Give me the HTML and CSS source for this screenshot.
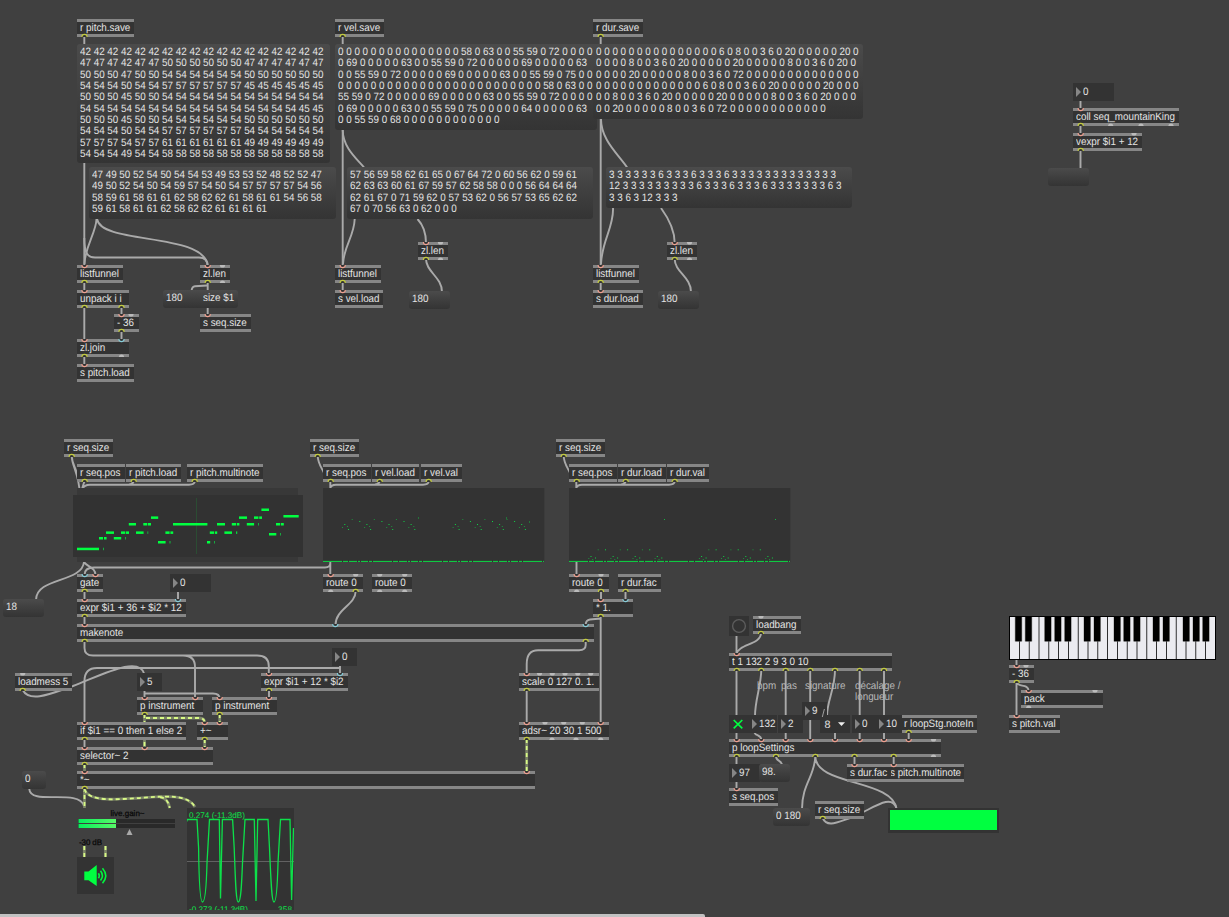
FILE: index.html
```html
<!DOCTYPE html>
<html lang="fr">
<head>
<meta charset="utf-8">
<title>Sequencer patch</title>
<link rel="stylesheet" href="styles.css">
</head>
<body>
<main class="patcher" id="patcher">
  <svg class="layer" id="cords" width="1229" height="917"></svg>

  <div class="message" style="left:77px;top:44px;width:253px;height:119px"><span class="txt">42 42 42 42 42 42 42 42 42 42 42 42 42 42 42 42 42 42
47 47 47 42 47 47 50 50 50 50 50 50 47 47 47 47 47 47
50 50 50 47 50 50 54 54 54 54 54 54 50 50 50 50 50 50
54 54 54 50 54 54 57 57 57 57 57 57 45 45 45 45 45 45
50 50 50 45 50 50 54 54 54 54 54 54 54 54 54 54 54 54
54 54 54 54 54 54 54 54 54 54 54 54 54 54 54 54 45 45
50 50 50 45 50 50 54 54 54 54 54 54 50 50 50 50 50 50
54 54 54 50 54 54 57 57 57 57 57 57 54 54 54 54 54 54
57 57 57 54 57 57 61 61 61 61 61 61 49 49 49 49 49 49
54 54 54 49 54 54 58 58 58 58 58 58 58 58 58 58 58 58</span></div>
  <div class="message" style="left:89px;top:167px;width:247px;height:52px"><span class="txt">47 49 50 52 54 50 54 54 53 49 53 53 52 48 52 52 47
49 50 52 54 50 54 59 57 54 50 54 57 57 57 57 54 56
58 59 61 58 61 61 62 58 62 62 61 58 61 61 54 56 58
59 61 58 61 61 62 58 62 62 61 61 61 61</span></div>
  <div class="message" style="left:335px;top:44px;width:262px;height:86px"><span class="txt">0 0 0 0 0 0 0 0 0 0 0 0 0 0 0 58 0 63 0 0 55 59 0 72 0 0 0 0
0 69 0 0 0 0 0 63 0 0 55 59 0 72 0 0 0 0 0 69 0 0 0 0 0 63
0 0 55 59 0 72 0 0 0 0 0 69 0 0 0 0 0 63 0 0 55 59 0 75 0 0 0
0 0 0 0 0 0 0 0 0 0 0 0 0 0 0 0 0 0 0 0 0 0 0 0 0 58 0 63 0 0 0
55 59 0 72 0 0 0 0 0 69 0 0 0 0 0 63 0 0 55 59 0 72 0 0 0 0
0 69 0 0 0 0 0 63 0 0 55 59 0 75 0 0 0 0 0 64 0 0 0 0 0 63
0 0 55 59 0 68 0 0 0 0 0 0 0 0 0 0 0 0</span></div>
  <div class="message" style="left:347px;top:167px;width:246px;height:52px"><span class="txt">57 56 59 58 62 61 65 0 67 64 72 0 60 56 62 0 59 61
62 63 63 60 61 67 59 57 62 58 58 0 0 0 56 64 64 64
62 61 67 0 71 59 62 0 57 53 62 0 56 57 53 65 62 62
67 0 70 56 63 0 62 0 0 0</span></div>
  <div class="message" style="left:593px;top:44px;width:270px;height:75px"><span class="txt">0 0 0 0 0 0 0 0 0 0 0 0 0 0 0 6 0 8 0 0 3 6 0 20 0 0 0 0 0 20 0
0 0 0 0 8 0 0 3 6 0 20 0 0 0 0 0 20 0 0 0 0 0 8 0 0 3 6 0 20 0
0 0 0 0 20 0 0 0 0 0 8 0 0 3 6 0 72 0 0 0 0 0 0 0 0 0 0 0 0 0 0
0 0 0 0 0 0 0 0 0 0 0 0 0 6 0 8 0 0 3 6 0 20 0 0 0 0 0 20 0 0 0
0 0 8 0 0 3 6 0 20 0 0 0 0 0 20 0 0 0 0 0 8 0 0 3 6 0 20 0 0 0
0 0 20 0 0 0 0 0 8 0 0 3 6 0 72 0 0 0 0 0 0 0 0 0 0 0 0</span></div>
  <div class="message" style="left:606px;top:167px;width:246px;height:41px"><span class="txt">3 3 3 3 3 3 6 3 3 3 6 3 3 3 6 3 3 3 3 3 3 3 3 3 3 3 3 3
12 3 3 3 3 3 3 3 3 3 6 3 3 3 6 3 3 3 6 3 3 3 3 3 3 3 6 3
3 3 6 3 12 3 3 3</span></div>

  <div class="comment" style="left:757px;top:681px"><span class="txt">bpm</span></div>
  <div class="comment" style="left:781px;top:681px"><span class="txt">pas</span></div>
  <div class="comment" style="left:805px;top:681px"><span class="txt">signature</span></div>
  <div class="comment" style="left:855px;top:681px"><span class="txt">décalage /
longueur</span></div>
</main>
<script src="patch.js"></script>
</body>
</html>
```
FILE: styles.css
```css
body {
  margin: 0;
  background: #404040;
  overflow: hidden;
}

.patcher {
  position: relative;
  width: 1229px;
  height: 917px;
  overflow: hidden;
  background: #404040;
  color: #e4e4e4;
  font-family: "Liberation Sans", Arial, sans-serif;
  font-size: 10.7px;
  text-rendering: geometricPrecision;
}

/* Slightly condensed lettering */
.txt {
  display: block;
  width: max-content;
  transform: scaleX(.9206);
  transform-origin: 0 0;
}

.layer {
  position: absolute;
  left: 0;
  top: 0;
  pointer-events: none;
}

.object,
.number,
.message,
.comment {
  position: absolute;
  box-sizing: border-box;
  white-space: pre;
}

.object {
  height: 18px;
  padding-left: 3px;
  border-top: 3px solid #868686;
  border-bottom: 3px solid #868686;
  background: #333;
  line-height: 12px;
}

.number {
  height: 18px;
  padding-left: 10px;
  background: #333;
  line-height: 18px;
}

.number::before {
  content: "";
  position: absolute;
  left: 3px;
  top: 4px;
  border-left: 5px solid #868686;
  border-top: 5px solid transparent;
  border-bottom: 5px solid transparent;
}

.message {
  padding: 3px 0 0 3px;
  border-radius: 3px;
  background: linear-gradient(#4b4b4b, #404040 45%, #343434);
  line-height: 11.33px;
}

.comment {
  color: #b8b8b8;
  line-height: 11.33px;
}

.cord {
  fill: none;
  stroke: #aaa;
  stroke-width: 1.9;
}

.signal-base {
  fill: none;
  stroke: #7c8468;
  stroke-width: 2.8;
}

.signal {
  fill: none;
  stroke: #d8fa86;
  stroke-width: 1.8;
  stroke-dasharray: 4 3;
}

.port { fill: #333; stroke-width: 1.1; }
.port-r { stroke: #f0a090; }
.port-b { stroke: #86ccd8; }
.port-y { stroke: #c3cc3e; }
.port-g { fill: #bbb; stroke: none; }

.display-text {
  fill: #0de04a;
  font-size: 8.2px;
}

.label-text {
  fill: #080808;
  stroke: #080808;
  stroke-width: .25;
  font-size: 8px;
}
```
FILE: patch.js
```js
const patcher = document.getElementById("patcher");
const NS = "http://www.w3.org/2000/svg";

// Ports are written as "<x><kind>": r = hot inlet, b = cold inlet, y = outlet, g = unconnected.
// [text, x, y, width, inlets, outlets]
const objects = [
  ["r pitch.save", 77, 19, 57, "", "84.5y"],
  ["listfunnel", 77, 265, 46, "84.5r", "84.5y"],
  ["zl.len", 200, 265, 30, "207.7r 222.5g", "207.7y 222.5g"],
  ["unpack i i", 77, 290, 52, "84.5r", "84.5y 121.5y"],
  ["- 36", 114, 314, 25, "121.5r 131g", "121.5y"],
  ["s seq.size", 200, 314, 51, "207.7r", ""],
  ["zl.join", 77, 339, 52, "84.5r 121.5b", "84.5y 121.5g"],
  ["s pitch.load", 77, 364, 57, "84.5r", ""],
  ["r vel.save", 335, 19, 49, "", "342.7y"],
  ["listfunnel", 335, 265, 46, "342.7r", "342.7y"],
  ["s vel.load", 335, 290, 48, "342.7r", ""],
  ["zl.len", 418, 242, 30, "426r 440.5g", "426y 440.5g"],
  ["r dur.save", 593, 19, 50, "", "600.7y"],
  ["listfunnel", 593, 265, 46, "600.7r", "600.7y"],
  ["s dur.load", 593, 290, 50, "600.7r", ""],
  ["zl.len", 667, 242, 30, "674.7r 689.5g", "674.7y 689.5g"],
  ["coll seq_mountainKing", 1073, 108, 106, "1080.7r", "1080.7y 1110.7g 1141g 1171g"],
  ["vexpr $i1 + 12", 1073, 133, 69, "1080.7r 1134g", "1080.7y"],
  ["r seq.size", 64, 439, 49, "", "71.7y"],
  ["r seq.pos", 77, 464, 48, "", "84.7y"],
  ["r pitch.load", 126, 464, 55, "", "133.7y"],
  ["r pitch.multinote", 187, 464, 76, "", "194.7y"],
  ["gate", 77, 574, 26, "84.7b 95.5r", "84.7y"],
  ["expr $i1 + 36 + $i2 * 12", 77, 599, 109, "84.7r 178b", "84.7y"],
  ["makenote", 77, 624, 517, "84.7r 335.3b 585.7b", "84.7y 585.7y"],
  ["r seq.size", 310, 439, 49, "", "317.7y"],
  ["r seq.pos", 323, 464, 48, "", "330.7y"],
  ["r vel.load", 372, 464, 47, "", "379.7y"],
  ["r vel.val", 421, 464, 41, "", "428.7y"],
  ["route 0", 323, 574, 40, "330.7r 355.7g", "330.7g 355.7y"],
  ["route 0", 372, 574, 40, "379.7g 404.7g", "379.7g 404.7g"],
  ["r seq.size", 556, 439, 49, "", "563.7y"],
  ["r seq.pos", 569, 464, 48, "", "576.7y"],
  ["r dur.load", 618, 464, 48, "", "625.7y"],
  ["r dur.val", 667, 464, 42, "", "674.7y"],
  ["route 0", 569, 574, 40, "576.7r 601g", "576.7g 601y"],
  ["r dur.fac", 618, 574, 43, "", "625.5y"],
  ["* 1.", 593, 599, 40, "600.7r 625.5b", "600.7y"],
  ["scale 0 127 0. 1.", 519, 673, 80, "526.7r 539.5g 552.3g 565g 577.8g 590.7g", "526.7y"],
  ["adsr~ 20 30 1 500", 519, 722, 90, "526.7r 545g 563.7g 582.3g 600.7r", "526.7y 552g 576g 600.7g"],
  ["loadmess 5", 15, 673, 57, "22.7g", "22.7y"],
  ["expr $i1 + 12 * $i2", 261, 673, 87, "269r 340b", "269y"],
  ["p instrument", 137, 697, 66, "144.7r 195.3r", "144.7y"],
  ["p instrument", 212, 697, 65, "219.7r 269r", "219.7y"],
  ["if $i1 == 0 then 1 else 2", 77, 722, 109, "84.7r", "84.7y"],
  ["+~", 197, 722, 31, "204.7r 219.7r", "204.7y"],
  ["selector~ 2", 77, 747, 136, "84.7r 144.7r 204.7r", "84.7y"],
  ["*~", 77, 771, 458, "84.7r 526.7r", "84.7y"],
  ["loadbang", 753, 616, 48, "761g", "761y"],
  ["t 1 132 2 9 3 0 10", 729, 653, 163, "736.7r", "736.7y 761.3y 785.7y 810.3y 835y 859.7y 884y"],
  ["r loopStg.noteIn", 901, 715, 76, "", "908.7y"],
  ["p loopSettings", 729, 739, 212, "736.7r 761.3r 785.7r 810.3r 835r 859.7r 884r 908.7r 933.5g", "736.7y 776y 815.3y 854.5y 893.7y 933.5g"],
  ["s pitch.multinote", 887, 764, 77, "893.7r", ""],
  ["s dur.fac", 847, 764, 44, "854.5r", ""],
  ["s seq.pos", 729, 788, 49, "736.7r", ""],
  ["r seq.size", 815, 801, 49, "", "822.7y"],
  ["- 36", 1009, 665, 25, "1016.7r 1026g", "1016.7y"],
  ["pack", 1021, 690, 82, "1028.7r 1095g", "1028.7g"],
  ["s pitch.val", 1009, 715, 51, "1016.7r", ""]
];

// [text, x, y, width]
const messages = [
  ["180", 163, 290, 41], ["size $1", 200, 290, 38], ["180", 409, 291, 41], ["180", 658, 291, 41],
  ["", 1048, 168, 41], ["18", 3, 599, 41], ["0", 22, 771, 24], ["0 180", 773, 808, 37]
];
const numbers = [
  ["0", 1073, 83, 41], ["0", 170, 574, 41], ["0", 332, 648, 25], ["5", 137, 673, 25],
  ["132", 749, 715, 28], ["2", 778, 715, 25], ["9", 802, 702, 25],
  ["0", 852, 715, 26], ["10", 876, 715, 26], ["97", 729, 764, 31]
];

const cords = [
  "M84.3 36V266M342.7 36V266M600.7 36V266",
  "M96.5 219C96 233 85 246 84.5 264M97 219C101 245 205 232 207.7 266",
  "M84.3 238C84.3 254 88 257.5 95 257.5H199Q207.7 257.5 207.7 266",
  "M84.3 283V291M84.3 307V340M121.5 307V315M121.5 331V340M84.3 356V365M207.7 282V315",
  "M207 285.5L195 286.2Q192 286.5 191.5 291",
  "M342.7 130C343 148 357 159 364.5 168M354.7 219C354 237 344 245 343 264M417.5 219C424 226 426 233 426 243",
  "M342.7 282V291M426 259C426 272 442 277 442 292",
  "M601 119C601 140 618 154 627.5 168M613 208C614 227 602 240 601 264M661 208C669 219 674.7 230 674.7 243",
  "M600.7 282V291M674.7 259C674.7 272 691 277 691 292",
  "M1080.5 101V109M1080.5 125V134M1080.5 150V169",
  "M71.7 456C72 467 79 473 80 495M71.7 456C72 464 76 468 77 474",
  "M84.5 481L82 489M194.7 481Q195 484.7 189 484.7H90Q84 484.7 82.5 489M133.7 481Q133 484 129 484.5",
  "M84 562C82 583 36 577 36 600M84 562C87 567 95.5 567 95.5 575",
  "M330.3 561V575M330.3 563Q330.3 567.5 325 567.5H94Q84.5 567.5 84.5 575",
  "M84.5 591V600M178 591V600M84.5 616V625",
  "M317.7 456C318 464 322 468 324 473M330.3 481V489M428.7 481Q428.7 484.7 423 484.7H336Q331 484.7 330.3 488M379.7 481Q379 484 375 484.5",
  "M355.7 591C355.7 605 335.5 609 335.5 625",
  "M563.7 456C564 464 568 468 570 473M576.3 481V489M674.7 481Q674.7 484.7 669 484.7H582Q577 484.7 576.3 488M625.7 481Q625 484 621 484.5",
  "M576.5 561V575M601 591V600M625.5 591V600M600.7 616V723M600.7 618.5L590 619.5Q585.7 620 585.7 625",
  "M585.7 641V645Q585.7 650 579 650.3H538C530 650.3 526.7 656 526.7 664V674M526.7 690V723",
  "M84.5 641V648Q84.5 655.5 93 655.5H257Q268.8 655.5 268.8 666V674M183 655.5Q195 655.5 195 667V698",
  "M340 665V674M340 668H97Q84.5 668 84.5 681V723",
  "M22.7 690C30 704 55 692 73 686C102 675 139 655 144.3 674",
  "M144.5 690V698M144.5 693.5H213Q219.7 693.5 219.7 699M269 690V698M84.5 739V748",
  "M29.3 789C30 806 79 788 84 806",
  "M736.5 635V654M761 633C761 645 738 644 736.7 654",
  "M736.5 670V740M785.7 670V740M810.2 670V740M859.7 670V740M884 670V740",
  "M761.3 670C761 686 755 700 755 716M754 732C756 737 761 734 761.3 740",
  "M835 670C835 689 827 701 827 716M835 732V740M908.7 732V740",
  "M736.5 756V765M736.5 781V789M776 756C776 762 781 759 782 765M854.5 756V765M893.7 756V765",
  "M815.3 756C815 776 802 784 802 809M815.3 756C815 786 893 779 896.5 809",
  "M822.7 818C827 828 838 822 850 818C870 811 891 792 896.5 808",
  "M1016.5 660V666M1016.5 682V716M1016.5 682C1018 688 1028 683 1028.7 691"
];

const signals = [
  "M144.5 714V748M146 718H199Q204.7 718 204.7 723", "M219.7 714V723", "M204.7 739V748",
  "M84.5 764V772", "M84.5 788V808",
  "M84.5 789C88 803 120 799 140 798C165 796 188 794 195 807",
  "M160 797Q168 798 169.7 808", "M84.3 846V857", "M105.5 846V857", "M526.7 739V772"
];

function box(kind, [text, x, y, w]) {
  const el = document.createElement("div");
  const label = document.createElement("span");
  el.className = kind;
  label.className = "txt";
  label.textContent = text;
  el.appendChild(label);
  el.style.cssText = `left:${x}px;top:${y}px;width:${w}px;height:18px`;
  patcher.appendChild(el);
}

function layer(markup) {
  const svg = document.createElementNS(NS, "svg");
  svg.setAttribute("class", "layer");
  svg.setAttribute("width", 1229);
  svg.setAttribute("height", 917);
  svg.innerHTML = markup;
  patcher.appendChild(svg);
}

const rect = (x, y, w, h, fill, extra = "") =>
  `<rect x="${x}" y="${y}" width="${w}" height="${h}" fill="${fill}" ${extra}/>`;

document.getElementById("cords").innerHTML =
  cords.map(d => `<path class="cord" d="${d}"/>`).join("") +
  signals.map(d => `<path class="signal-base" d="${d}"/><path class="signal" d="${d}"/>`).join("");

numbers.slice(0, 4).forEach(n => box("number", n));
messages.forEach(m => box("message", m));
objects.forEach(o => box("object", o));
numbers.slice(4).forEach(n => box("number", n));
box("message", ["98.", 759, 764, 31]);

// Inlets and outlets
let ports = "";
const eachPort = (list, draw) => list.split(" ").filter(Boolean).forEach(p => draw(parseFloat(p), p.slice(-1)));
objects.forEach(([, , y, , ins, outs]) => {
  eachPort(ins, (x, k) => { ports += `<path class="port port-${k}" d="M${x - 2.6} ${y}a2.6 2.6 0 0 0 5.2 0"/>`; });
  eachPort(outs, (x, k) => { ports += `<path class="port port-${k}" d="M${x - 2.6} ${y + 18}a2.6 2.6 0 0 1 5.2 0"/>`; });
});

// Pitch table: [x, y, width, dim]
const notes = [
  [77, 549, 22], [103, 549, 1, 1], [99, 538.3, 4], [104, 538.3, 2.6], [106, 532.7, 8], [113.8, 538.3, 7.4],
  [121, 532.7, 4.3], [126, 532.7, 3], [125, 538.3, 1, 1], [128.8, 524.3, 7.2], [136, 532.7, 7.6],
  [143.3, 524.3, 4], [148, 524.3, 3], [147.3, 532.7, 1, 1], [151, 517.7, 7.2], [158, 542.3, 7.6],
  [169.4, 542.3, 1.2, 1], [165.4, 532.7, 4.2], [170.4, 532.7, 2.8], [173, 524.3, 34.4], [207, 542.3, 3.2],
  [214, 542.3, 1, 1], [209.8, 532.7, 4.4], [215, 532.7, 2.2], [217, 524.3, 8], [224.4, 532.7, 7.6],
  [231.8, 524.3, 4.2], [236.8, 524.3, 2.6], [236.2, 532.7, 1], [239, 517.7, 8], [246.8, 524.3, 7.3],
  [258, 524.3, 1, 1], [254, 517.7, 4.4], [259.2, 517.7, 2.8], [261.4, 509.8, 7.6], [269, 534.3, 7.3],
  [280, 534.3, 1, 1], [276, 524.3, 4.2], [281, 524.3, 2.8], [283.4, 516.3, 15.3]
];
let art = rect(77, 488, 221, 74, "#383838") + rect(73, 495, 230, 62, "#323232") +
  rect(196, 498, 1, 56, "#2b4c33");
notes.forEach(([x, y, w, dim]) => { art += rect(x, y - 1.3, w, 2.5, dim ? "#18a840" : "#00ff40"); });

// Velocity and duration sliders
function slider(x0, shape, extras) {
  art += rect(x0, 488, 221.3, 74, "#333");
  for (let g = 0; g < 2; g++) {
    for (let r = 0; r < 4; r++) {
      shape.forEach(([dx, y], i) => {
        const x = x0 + dx + g * 110.6 + r * 22.1;
        if (!(r === 3 && i > 3)) art += rect(x.toFixed(1), y, 1, 1, i % 2 ? "#0fd446" : "#1f8f3d");
      });
    }
  }
  extras.forEach(([x, y]) => { art += rect(x, y, 1, 1, "#14b441"); });
  art += `<path d="M${x0} 561.4h221" stroke="#0cdc45" stroke-width="1" stroke-dasharray="19 1 5 1 8 1 2 1 7 1 3 1"/>`;
}
slider(323, [[19, 527], [21.3, 524], [24, 526], [25, 529], [28.7, 519], [36.3, 521]],
  [[418, 517.5], [506, 517.5], [529, 521.5]]);
slider(569, [[19.3, 558], [21.5, 556], [23.2, 559], [26, 557.5], [28.7, 549.3], [36, 549.3]],
  [[664, 519], [775, 519]]);

// Gain meter
art += `<defs><linearGradient id="meter"><stop stop-color="#08f05c"/><stop offset="1" stop-color="#58f868"/></linearGradient></defs>`;
art += rect(78, 819, 97, 4, "#292929") + rect(78, 824, 97, 4, "#292929") +
  rect(78.5, 819, 37.5, 4, "url(#meter)") + rect(78.5, 824, 37.5, 4, "url(#meter)") +
  `<path d="M126.5 835h6l-3-6z" fill="#aaa"/>
   <text class="label-text" x="110.5" y="815.5" textLength="34">live.gain~</text>
   <text class="label-text" x="79" y="844.5" textLength="23">-30 dB</text>`;

// Audio on/off speaker
art += rect(77, 857, 37, 37, "#333") +
  `<path d="M84.3 871.5H88.5L96.7 865V886L88.5 880.3H84.3Z" fill="#00ff40"/>
   <path d="M98.4 873.2Q100.2 875.7 98.4 878.2M100.5 870.8Q104.3 875.7 100.5 880.6M102.5 868.2Q109 875.7 102.5 883.2" fill="none" stroke="#00f53e" stroke-width="1.6"/>`;

// Oscilloscope
art += `<svg x="187" y="808" width="107" height="102">
  <rect width="107" height="102" fill="#333"/>
  <path d="M0 53.5H107" stroke="#626262"/>
  <path d="M0 13.5V11.5H10L11.6 40C12 75 13 94 15.5 94C18.5 94 19.5 75 20 55L22.5 11.5H32.3L33.5 90.5L35.4 11.5H45.6L47.2 40C48.5 75 49 94 51.3 94C54 94 54.7 75 55.5 55L58 11.5H67.3L69 93L70.7 11.5H81L82.5 40C84 75 84.7 94 87 94C89.6 94 90.5 75 91 55L93.5 11.5H103L104.6 92L106.5 20" fill="none" stroke="#0de04a" stroke-width="1.3"/>
  <text class="display-text" x="2" y="9.5" textLength="56">0.274 (-11.3dB)</text>
  <text class="display-text" x="2" y="104" textLength="59">-0.273 (-11.3dB)</text>
  <text class="display-text" x="91" y="104" textLength="14">358</text>
</svg>`;

// Bang button, toggle, menu and status panel
art += rect(729, 616, 20, 20, "#333") +
  `<circle cx="739" cy="626" r="6.4" fill="none" stroke="#5c5c5c" stroke-width="1.4"/>` +
  rect(729, 715, 20, 18, "#333") +
  `<path d="M733.7 720L742.3 728.3M742.3 720L733.7 728.3" stroke="#00ff40" stroke-width="1.7"/>` +
  rect(820, 715, 30, 18, "#333") +
  `<path d="M838 722.3h7l-3.5 3.6z" fill="#eee"/>
   <path d="M822.3 717L824.4 709" stroke="#aaa" stroke-width=".9"/>
   <text x="824.5" y="727.7" fill="#e2e2e2">8</text>` +
  rect(888, 808, 111, 25, "#333") + rect(890, 810, 107, 20, "#00ff40");

// Keyboard
art += rect(1009, 616, 207, 44, "#000");
for (let k = 0; k < 21; k++) art += rect((1010 + k * 9.8).toFixed(1), 617, 9, 42, "#ebebf0");
[15.3, 25.3, 44.7, 54.7, 64.7, 84, 94, 114, 123.7, 133.7, 153, 163, 183, 193, 202.7].forEach(x => {
  art += rect(1000 + x - 0.6, 617, 7.6, 24.4, "#aaa") + rect(1000 + x, 617, 6.4, 24.4, "#000");
});

// Horizontal scrollbar
art += rect(-4, 914, 709, 6, "#c2c2c2", 'rx="2"');

layer(art + ports);
```
